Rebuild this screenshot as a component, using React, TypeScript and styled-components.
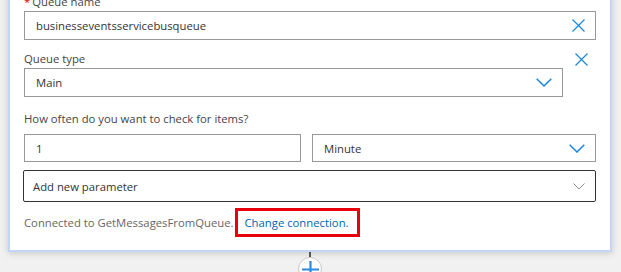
import React from "react";
import styled, { createGlobalStyle } from "styled-components";

const GlobalStyle = createGlobalStyle`
  html, body {
    margin: 0;
    padding: 0;
    background: #f1f1f1;
    overflow: hidden;
  }
  body {
    font-family: "Segoe UI", "Open Sans", "Noto Sans", sans-serif;
  }
`;

const Page = styled.div`
  width: 621px;
  height: 272px;
  overflow: hidden;
`;

const Card = styled.div`
  box-sizing: border-box;
  width: 604px;
  margin: -20px 0 0 8px;
  padding: 11px 14px 13px 14px;
  background: #fff;
  border: 2px solid #c5d5f6;
  box-shadow: 0 1px 7px rgba(0, 0, 0, 0.18);
`;

const Field = styled.div<{ $top?: number }>`
  margin-top: ${(p) => p.$top ?? 0}px;
`;

const Label = styled.div<{ $gap?: number }>`
  font-size: 11.3px;
  line-height: 18px;
  color: #444;
  margin-bottom: ${(p) => p.$gap ?? 0}px;
`;

const Required = styled.span`
  color: #d00;
  margin-right: 2px;
`;

const Box = styled.div<{ $h?: number; $pad?: number; $dark?: boolean }>`
  box-sizing: border-box;
  height: ${(p) => p.$h ?? 29}px;
  display: flex;
  align-items: center;
  justify-content: space-between;
  padding: 0 10px 0 ${(p) => p.$pad ?? 11}px;
  border: 1px solid ${(p) => (p.$dark ? "#333" : "#999")};
  border-radius: ${(p) => (p.$dark ? 2 : 0)}px;
  background: #fff;
  font-size: 11.3px;
  color: #333;
`;

const Row = styled.div`
  display: flex;
  align-items: flex-start;
`;

const Grow = styled.div`
  width: 539px;
`;

const SideIcon = styled.div`
  margin: 3px 0 0 12px;
  display: flex;
`;

const Split = styled.div`
  display: grid;
  grid-template-columns: 277px 284px;
  column-gap: 11px;
`;

const Wide = styled.div`
  margin: 8px 0 0 -1px;
`;

const Footer = styled.div`
  margin-top: 6px;
  display: flex;
  align-items: center;
  font-size: 11.3px;
  color: #666;
`;

const Highlight = styled.a`
  display: inline-block;
  margin-left: 1px;
  padding: 3px 8px 3px 7px;
  line-height: 17px;
  border: 3px solid #e8000b;
  color: #0063b1;
  text-decoration: none;
`;

const Connector = styled.div`
  display: flex;
  flex-direction: column;
  align-items: center;
  width: 24px;
  margin-left: 298px;
`;

const Stem = styled.div`
  width: 2px;
  height: 5px;
  background: #555;
`;

const AddCircle = styled.div`
  box-sizing: border-box;
  width: 24px;
  height: 24px;
  border-radius: 50%;
  background: #fff;
  border: 1px solid #c8c8c8;
  display: flex;
  align-items: center;
  justify-content: center;
`;

const Close = () => (
  <svg width="13" height="13" viewBox="0 0 13 13">
    <path d="M0.5 0.5 L12.5 12.5 M12.5 0.5 L0.5 12.5" stroke="#1a86d9" strokeWidth="1.2" />
  </svg>
);

const Chevron = ({ muted }: { muted?: boolean }) =>
  muted ? (
    <svg width="12" height="7" viewBox="0 0 12 7">
      <path d="M0.5 0.5 L6 6 L11.5 0.5" stroke="#8a8a8a" strokeWidth="1" fill="none" />
    </svg>
  ) : (
    <svg width="16" height="9" viewBox="0 0 16 9">
      <path d="M0.7 0.7 L8 8 L15.3 0.7" stroke="#1a86d9" strokeWidth="1.5" fill="none" />
    </svg>
  );

const Plus = () => (
  <svg width="17" height="17" viewBox="0 0 17 17">
    <path d="M8.5 0 V17 M0 8.5 H17" stroke="#2a8ae0" strokeWidth="2.2" />
  </svg>
);

export default function App() {
  return (
    <Page>
      <GlobalStyle />
      <Card>
        <Field>
          <Label>
            <Required>*</Required>Queue name
          </Label>
          <Box>
            <span>businesseventsservicebusqueue</span>
            <Close />
          </Box>
        </Field>

        <Field $top={10}>
          <Row>
            <Grow>
              <Label>Queue type</Label>
              <Box>
                <span>Main</span>
                <Chevron />
              </Box>
            </Grow>
            <SideIcon>
              <Close />
            </SideIcon>
          </Row>
        </Field>

        <Field $top={13}>
          <Label $gap={6}>How often do you want to check for items?</Label>
          <Split>
            <Box $h={28}>
              <span>1</span>
            </Box>
            <Box $h={28}>
              <span>Minute</span>
              <Chevron />
            </Box>
          </Split>
        </Field>

        <Wide>
          <Box $h={32} $pad={9} $dark>
            <span>Add new parameter</span>
            <Chevron muted />
          </Box>
        </Wide>

        <Footer>
          <span>Connected to GetMessagesFromQueue.</span>
          <Highlight href="#">Change connection.</Highlight>
        </Footer>
      </Card>
      <Connector>
        <Stem />
        <AddCircle>
          <Plus />
        </AddCircle>
      </Connector>
    </Page>
  );
}
